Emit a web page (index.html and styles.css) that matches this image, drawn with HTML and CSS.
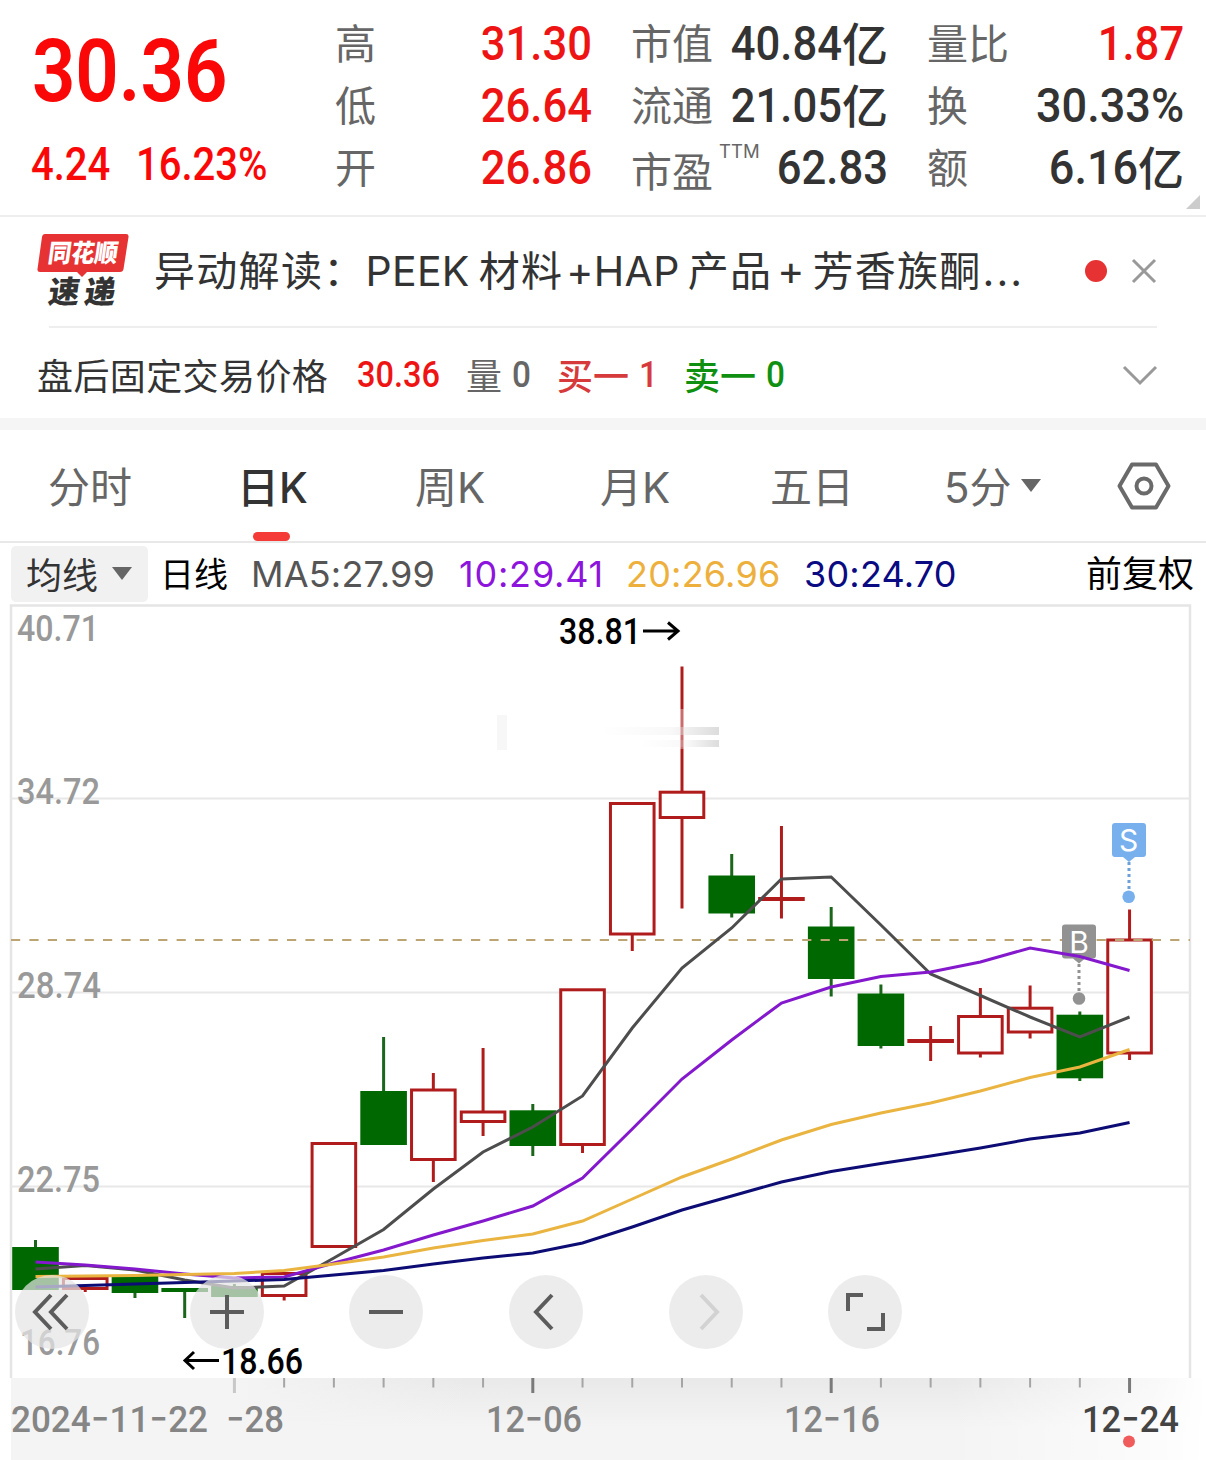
FILE: index.html
```html
<!DOCTYPE html>
<html lang="zh-CN">
<head>
  <meta charset="UTF-8" />
  <meta name="viewport" content="width=device-width, initial-scale=1.0" />
  <title>日K</title>
  <link rel="stylesheet" href="styles.css">
</head>
<body>

  <header class="quote">
    <div class="price">
      <div class="last num">30.36</div>
      <div class="change">
        <span class="num">4.24</span>
        <span class="num">16.23%</span>
      </div>
    </div>
    <dl class="stats">
      <div><dt>高</dt><dd class="up"><span class="num">31.30</span></dd></div>
      <div><dt>低</dt><dd class="up"><span class="num">26.64</span></dd></div>
      <div><dt>开</dt><dd class="up"><span class="num">26.86</span></dd></div>
    </dl>
    <dl class="stats">
      <div><dt>市值</dt><dd><span class="num">40.84</span>亿</dd></div>
      <div><dt>流通</dt><dd><span class="num">21.05</span>亿</dd></div>
      <div><dt class="low">市盈<sup>TTM</sup></dt><dd><span class="num">62.83</span></dd></div>
    </dl>
    <dl class="stats">
      <div><dt>量比</dt><dd class="up"><span class="num">1.87</span></dd></div>
      <div><dt>换</dt><dd><span class="num wide">30.33%</span></dd></div>
      <div><dt>额</dt><dd><span class="num wide">6.16</span>亿</dd></div>
    </dl>
    <i class="corner"></i>
  </header>

  <section class="notice">
    <svg class="brand" width="92" height="84" viewBox="0 -4 92 84">
      <path d="M8 1h81q3 0 2.500 3l-5 32q-.5 3-3.500 3H50l-5 5-5-5H3q-3 0-2.500-3l4.500-32q.5-3 3-3z" fill="#e63232"/>
      <g transform="skewX(-8)">
        <text x="14" y="29" textLength="70" lengthAdjust="spacingAndGlyphs" class="brand-top">同花顺</text>
        <text x="20" y="70" textLength="31" lengthAdjust="spacingAndGlyphs" class="brand-bottom">速</text>
        <text x="56" y="70" textLength="31" lengthAdjust="spacingAndGlyphs" class="brand-bottom">递</text>
      </g>
    </svg>
    <p><span>异动解读：</span><span class="latin peek">PEEK</span><span>材料</span><span class="latin hap">+HAP</span><span>产品</span><span class="latin plus">+</span><span>芳香族酮</span><span class="latin dots">...</span></p>
    <i class="dot"></i>
    <svg class="close" width="26" height="26" viewBox="0 0 26 26"><path d="M2 2l22 22M24 2L2 24"/></svg>
  </section>

  <section class="fixed-price">
    <span class="title">盘后固定交易价格</span>
    <span class="num now">30.36</span>
    <span class="vol">量</span><span class="num vol">0</span>
    <span class="buy">买一</span><span class="num buy">1</span>
    <span class="sell">卖一</span><span class="num sell">0</span>
    <svg class="chevron" width="36" height="22" viewBox="0 0 36 22"><path d="M2 2l16 16L34 2"/></svg>
  </section>

  <nav class="tabs">
    <a>分时</a>
    <a class="active">日K</a>
    <a>周K</a>
    <a>月K</a>
    <a>五日</a>
    <a>5分<i class="caret"></i></a>
    <svg width="54" height="48" viewBox="0 0 54 48"><path d="M15 2.500h24L51.500 24 39 45.500H15L2.500 24z"/><circle cx="27" cy="24" r="7.500"/></svg>
  </nav>

  <section class="legend">
    <button><span>均线</span><i class="caret"></i></button>
    <span class="day">日线</span>
    <span class="ma ma5">MA5:27.99</span>
    <span class="ma ma10">10:29.41</span>
    <span class="ma ma20">20:26.96</span>
    <span class="ma ma30">30:24.70</span>
    <span class="adjust">前复权</span>
  </section>

  <main class="chart">
    <svg id="chart" width="1206" height="856" viewBox="0 604 1206 856">
      <defs>
        <linearGradient id="fadeX">
          <stop offset="0" stop-color="#fff" stop-opacity="0"/>
          <stop offset="0.800" stop-color="#fff" stop-opacity="0.700"/>
          <stop offset="1" stop-color="#fff"/>
        </linearGradient>
        <linearGradient id="shadeY" x2="0" y2="1">
          <stop offset="0" stop-color="#e9e9e9"/>
          <stop offset="1" stop-color="#f4f4f4"/>
        </linearGradient>
        <linearGradient id="shadeLeft">
          <stop offset="0" stop-color="#f4f4f4"/>
          <stop offset="1" stop-color="#f4f4f4" stop-opacity="0"/>
        </linearGradient>
        <linearGradient id="smudge">
          <stop offset="0" stop-color="#ddd" stop-opacity="0"/>
          <stop offset="0.600" stop-color="#ddd" stop-opacity="0.200"/>
          <stop offset="1" stop-color="#dcdcdc"/>
        </linearGradient>
      </defs>

      <g class="axis-bg">
        <rect x="11" y="1378" width="1195" height="82" fill="#f4f4f4"/>
        <rect x="230" y="1378" width="976" height="50" fill="url(#shadeY)"/>
        <rect x="229" y="1378" width="240" height="50" fill="url(#shadeLeft)"/>
        <rect x="950" y="1378" width="256" height="82" fill="url(#fadeX)"/>
      </g>
      <path class="grid" d="M11 1378V605.500H1190V1378"/>
      <path class="grid thin" d="M11 798.500H1190M11 992.500H1190M11 1186.500H1190"/>

      <g class="scale">
        <text x="17" y="641" textLength="82">40.71</text>
        <text x="17" y="804" textLength="83">34.72</text>
        <text x="17" y="998" textLength="84">28.74</text>
        <text x="17" y="1192" textLength="83">22.75</text>
        <text x="20" y="1355" textLength="80">16.76</text>
      </g>

      <g id="candles"></g>
      <g class="smudges">
        <rect x="497" y="715" width="10" height="35" fill="#f7f7f7"/>
        <rect x="600" y="727" width="119" height="8" fill="url(#smudge)"/>
        <rect x="640" y="740" width="79" height="7" fill="url(#smudge)"/>
        <rect x="680" y="709" width="4" height="40" fill="#fff" opacity="0.350"/>
      </g>
      <path class="last-line" d="M11 940H1190"/>

      <g class="mark sell-mark">
        <path d="M1115 823h28q3 0 3 3v28q0 3-3 3h-8l-6 5-6-5h-8q-3 0-3-3v-28q0-3 3-3z"/>
        <path class="stem" d="M1129 862V890"/>
        <circle cx="1128.700" cy="896.700" r="6.300"/>
        <text x="1128.500" y="851">S</text>
      </g>
      <g class="mark buy-mark">
        <path d="M1065 924.500h28q3 0 3 3v28q0 3-3 3h-8l-6 5-6-5h-8q-3 0-3-3v-28q0-3 3-3z"/>
        <path class="stem" d="M1079 964V992"/>
        <circle cx="1079" cy="998.500" r="6.300"/>
        <text x="1079" y="952.500">B</text>
      </g>
      <g id="lines"></g>

      <g class="extreme">
        <text x="559" y="643.500" textLength="82">38.81</text>
        <path d="M643 631H677M668 622.500L678 631L668 639.500"/>
        <text x="221" y="1373.500" textLength="82">18.66</text>
        <path d="M219 1360.500H186M194 1352L185 1360.500L194 1369"/>
      </g>

      <g id="ticks"></g>
      <g id="dates"></g>
      <circle cx="1129" cy="1441.500" r="6" fill="#f05c5c"/>
    </svg>

    <div class="tools">
      <button><svg viewBox="0 0 74 74"><path d="M36 20L20 37L36 54M52 20L36 37L52 54"/></svg></button>
      <button><svg viewBox="0 0 74 74"><path d="M37 20V54M20 37H54"/></svg></button>
      <button><svg viewBox="0 0 74 74"><path d="M20 37H54"/></svg></button>
      <button><svg viewBox="0 0 74 74"><path d="M43 20L27 37L43 54"/></svg></button>
      <button class="disabled"><svg viewBox="0 0 74 74"><path d="M32 20L48 37L32 54"/></svg></button>
      <button><svg viewBox="0 0 74 74"><path d="M20 36V20H35M55 38V54H39"/></svg></button>
    </div>
  </main>

  <script src="chart.js"></script>
</body>
</html>
```

FILE: styles.css
```css
/* Reset */
* {
  margin: 0;
  padding: 0;
  box-sizing: border-box;
}

body {
  width: 1206px;
  height: 1460px;
  overflow: hidden;
  background: #fff;
  color: #333;
  font-family: Inter, "Noto Sans CJK SC", sans-serif;
}

button {
  border: none;
  font: inherit;
}

svg {
  display: block;
  flex: none;
}

/* Narrow digits */
.num {
  display: inline-block;
  font-family: Roboto, sans-serif;
  font-weight: 500;
  transform: scaleX(0.9);
  transform-origin: left;
}

/* Quote header */
.quote {
  position: relative;
  display: grid;
  grid-template-columns: 265px 256px 256px 256px;
  column-gap: 40px;
  height: 217px;
  padding: 13px 0 0 31px;
  border-bottom: 2px solid #eee;
}

.price {
  color: #fa0808;
  white-space: nowrap;
}

.last {
  height: 118px;
  padding-left: 1px;
  line-height: 116px;
  font-size: 87px;
  font-weight: 600;
  transform: scaleX(0.875);
}

.change {
  display: flex;
  gap: 14px;
  font-size: 46px;
  line-height: 66px;
}

.change .num {
  transform: scaleX(0.87);
}

.stats div {
  display: flex;
  justify-content: space-between;
  height: 62px;
  line-height: 62px;
}

.stats dt {
  margin-left: -1px;
  font-size: 41px;
  color: #666;
  white-space: nowrap;
}

.stats dt.low {
  padding-top: 4px;
}

.stats sup {
  display: inline-block;
  margin-left: 6px;
  font-size: 18.5px;
  line-height: 20px;
  vertical-align: 29px;
}

.stats dd {
  display: flex;
  font-size: 46px;
  font-weight: 500;
}

.stats .num {
  font-size: 49px;
  transform: scaleX(0.89);
  transform-origin: right;
}

.stats .num.wide {
  transform: scaleX(0.92);
}

.up {
  color: #ee1414;
}

.corner {
  position: absolute;
  right: 6px;
  bottom: 6px;
  border: 7.5px solid #ccc;
  border-top-color: transparent;
  border-left-color: transparent;
}

/* News notice */
.notice {
  display: flex;
  align-items: center;
  height: 111px;
  padding-bottom: 2px;
  margin: 0 49px;
  border-bottom: 2px solid #eee;
}

.brand {
  margin-left: -12px;
}

.brand-top {
  fill: #fff;
  font-size: 25px;
  font-weight: 900;
}

.brand-bottom {
  fill: #333;
  font-size: 31px;
  font-weight: 900;
}

.notice p {
  display: flex;
  align-items: center;
  width: 934px;
  margin-left: 25px;
  font-size: 41px;
  letter-spacing: 1.3px;
  line-height: 60px;
}

.latin {
  letter-spacing: 0;
}

.peek { margin-right: 9px; letter-spacing: 0.3px; }
.hap { margin: 0 8px 0 3px; letter-spacing: 0.3px; }
.plus { margin: -2px 8px 0 5px; }
.dots { margin-left: 1px; letter-spacing: 2px; }

.dot {
  width: 22px;
  height: 22px;
  border-radius: 50%;
  background: #e63232;
}

.close {
  margin-left: 24px;
}

.close path,
.chevron path {
  fill: none;
  stroke: #999;
  stroke-width: 3;
}

/* After-hours fixed price */
.fixed-price {
  display: flex;
  align-items: center;
  height: 102px;
  padding: 1px 48px 0 37px;
  border-bottom: 12px solid #f5f5f5;
  font-size: 36px;
}

.fixed-price .title {
  width: 320px;
  letter-spacing: 0.4px;
}

.fixed-price .num {
  margin-top: 2px;
  font-size: 37px;
}

.fixed-price .num.now {
  width: 109px;
  transform: scaleX(0.88);
}

.fixed-price .num.vol,
.fixed-price .num.buy,
.fixed-price .num.sell {
  margin-left: 10px;
  width: 45px;
}

.now {
  color: #ee1414;
}

.vol {
  color: #666;
}

.buy {
  color: #d63a3a;
  font-weight: 500;
}

.sell {
  color: #109010;
  font-weight: 500;
}

.chevron {
  margin: 4px 0 0 auto;
}

/* Period tabs */
.tabs {
  display: grid;
  grid-template-columns: 189px 178px 185px 170px 174px 173px 54px;
  align-items: center;
  height: 113px;
  padding-left: 48px;
  border-bottom: 2px solid #e8e8e8;
  font-size: 42px;
  color: #666;
}

.tabs a {
  position: relative;
  display: flex;
  align-items: center;
  height: 111px;
  padding-bottom: 2px;
}

.tabs .active {
  color: #333;
  font-weight: 500;
}

.tabs .active::after {
  content: '';
  position: absolute;
  left: 16px;
  bottom: 0;
  width: 37px;
  height: 9px;
  border-radius: 5px;
  background: #f43b38;
}

.tabs path,
.tabs circle {
  fill: none;
  stroke: #6a6a6a;
  stroke-width: 4;
  stroke-linejoin: round;
}

.caret {
  margin: 2px 0 0 9px;
  border: 10px solid transparent;
  border-top: 13px solid #666;
  border-bottom: none;
}

/* Moving average legend */
.legend {
  display: flex;
  align-items: center;
  height: 61px;
  padding: 0 12px 0 11px;
  font-size: 36px;
}

.legend button {
  display: flex;
  align-items: center;
  width: 137px;
  height: 56px;
  padding: 0 0 2px 15px;
  border-radius: 5px;
  background: #f1f1f1;
  color: #333;
}

.legend .caret {
  margin-left: 14px;
}

.day {
  width: 103px;
  padding: 0 0 3px 12px;
  font-size: 34px;
  color: #000;
}

.ma {
  letter-spacing: 0.2px;
}

.ma5 { width: 208px; color: #555; }
.ma10 { width: 167px; color: #8c14dc; letter-spacing: 0.8px; }
.ma20 { width: 178px; color: #eeb03c; }
.ma30 { color: #0a0a82; }

.adjust {
  margin-left: auto;
  padding-bottom: 5px;
  color: #000;
}

/* Chart */
.chart {
  position: relative;
  height: 856px;
}

#chart text {
  font-family: Roboto, sans-serif;
  font-size: 36px;
  font-weight: 500;
}

#chart .scale {
  fill: #999;
}

.grid {
  fill: none;
  stroke: #e5e5e5;
  stroke-width: 2.5;
}

.grid.thin {
  stroke: #e8e8e8;
  stroke-width: 1.8;
}

.last-line {
  stroke: #bda573;
  stroke-width: 1.8;
  stroke-dasharray: 9.2 9.2;
}

.candle-up {
  fill: #fff;
  stroke: #b01c1c;
  stroke-width: 3;
}

.candle-down {
  fill: #006800;
  stroke: #1a661a;
  stroke-width: 3;
}

.candle-down rect {
  stroke: none;
}

#lines polyline {
  fill: none;
  stroke-width: 3;
}

#chart .mark text {
  fill: #fff;
  font-family: Inter, sans-serif;
  font-size: 30px;
  font-weight: 400;
  text-anchor: middle;
}

.sell-mark { fill: #78b0ee; stroke: #6d9fd8; }
.buy-mark { fill: #929292; stroke: #929292; }

.mark path,
.mark circle,
.mark text {
  stroke: none;
}

.mark .stem {
  stroke: inherit;
  stroke-width: 3;
  stroke-dasharray: 3;
}

.extreme path {
  fill: none;
  stroke: #000;
  stroke-width: 3;
}

#dates {
  fill: #858585;
}

#chart #dates .dash {
  font-family: Inter, sans-serif;
  font-size: 42px;
  font-weight: 400;
}

#chart #dates .today {
  fill: #444;
}

/* Floating chart tools */
.tools {
  position: absolute;
  left: 15px;
  top: 671px;
  display: flex;
  gap: 85.7px;
}

.tools button {
  width: 74px;
  height: 74px;
  border-radius: 50%;
  background: rgba(229, 229, 229, 0.72);
}

.tools button:first-child {
  margin-right: 15px;
}

.tools path {
  fill: none;
  stroke: #5c5c5c;
  stroke-width: 4;
}

.tools .disabled path {
  stroke: #d2d2d2;
}
```

FILE: chart.js
```js
const NS = "http://www.w3.org/2000/svg";
const step = 49.73;
const xAt = i => 35.5 + i * step;

function add(parent, tag, attrs, text) {
  const el = document.createElementNS(NS, tag);
  for (const key in attrs) el.setAttribute(key, attrs[key]);
  if (text) el.textContent = text;
  parent.appendChild(el);
  return el;
}

// [up, high, body top, body bottom, low]
const candles = [
  [0, 1240, 1247, 1290, 1290],
  [1, 1277, 1277, 1290, 1292],
  [0, 1276, 1276, 1293, 1298],
  [0, 1288, 1288, 1292, 1318],
  [0, 1284, 1286, 1297, 1297],
  [1, 1272, 1272, 1297, 1300.5],
  [1, 1142, 1142, 1248, 1248],
  [0, 1037, 1091, 1145, 1145],
  [1, 1073, 1088.5, 1161, 1182],
  [1, 1048, 1110.5, 1123, 1136],
  [0, 1104, 1110.3, 1146, 1156],
  [1, 989, 988.3, 1146, 1153],
  [1, 803, 802, 935.5, 951],
  [1, 666.5, 790.7, 819, 908.5],
  [0, 854, 875.5, 913.5, 917.5],
  [1, 826, 897, 901, 918.5],
  [0, 907, 926.5, 979, 996.5],
  [0, 984.5, 993.5, 1046, 1048.5],
  [1, 1026, 1039, 1043, 1061],
  [1, 988, 1015, 1054.5, 1057.5],
  [1, 985.5, 1006.7, 1033.5, 1038.5],
  [0, 1011.5, 1014.7, 1078.3, 1081],
  [1, 909.5, 938.5, 1054.5, 1060]
];

const candleLayer = document.getElementById("candles");
candles.forEach(([up, high, top, bottom, low], i) => {
  const x = xAt(i);
  const g = add(candleLayer, "g", { class: up ? "candle-up" : "candle-down" });
  add(g, "path", { d: `M${x} ${high}V${low}` });
  // hollow bodies keep their stroke inside the body box
  const inset = up ? 1.5 : 0;
  add(g, "rect", {
    x: x - 23.3 + inset,
    y: top + inset,
    width: 46.6 - inset * 2,
    height: bottom - top - inset * 2
  });
});

const averages = [
  ["#4d4d4d", [1269, 1265.5, 1270, 1280, 1288, 1286, 1258, 1229.5, 1189, 1152, 1127, 1096, 1028, 968, 928, 879, 877, 925, 974, 995.5, 1017, 1037, 1017]],
  ["#8418cc", [1262, 1265, 1269, 1274, 1278, 1277, 1263, 1250, 1235, 1221, 1206, 1178, 1129, 1079, 1040, 1003, 987, 976.5, 972, 962, 948, 956.5, 970.5]],
  ["#eab440", [1276.5, 1276, 1275.5, 1274.5, 1273.5, 1270.5, 1264, 1257, 1248, 1240.5, 1234, 1221, 1199, 1177, 1159, 1140, 1124.5, 1113, 1103, 1091, 1077.5, 1067, 1049.5]],
  ["#0c0c74", [1287, 1285.5, 1284, 1282.5, 1281, 1279.5, 1275, 1270.5, 1264, 1258, 1253, 1243, 1227, 1210, 1196, 1182, 1171.5, 1163.5, 1156, 1148, 1139, 1133, 1122.5]]
];

const lineLayer = document.getElementById("lines");
averages.forEach(([color, ys]) => {
  add(lineLayer, "polyline", {
    stroke: color,
    points: ys.map((y, i) => `${xAt(i)},${y}`).join(" ")
  });
});

// Time axis
const ticks = document.getElementById("ticks");
for (let i = 4; i < candles.length; i++) {
  const major = (i - 4) % 6 === 0;
  add(ticks, "path", {
    d: `M${xAt(i)} 1378V${major ? 1393 : 1387.5}`,
    stroke: i === 4 ? "#c8c8c8" : major ? "#7a7a7a" : "#a5a5a5",
    "stroke-width": major ? 3 : 2
  });
}

const dates = [
  ["2024-11-22", 11, 197],
  ["-28", 226, 58],
  ["12-06", 486, 96],
  ["12-16", 784, 96],
  ["12-24", 1082, 97, "today"]
];

const dateLayer = document.getElementById("dates");
dates.forEach(([label, x, width, cls]) => {
  const t = add(dateLayer, "text", {
    x, y: 1432, textLength: width, lengthAdjust: "spacingAndGlyphs", class: cls || ""
  });
  label.split(/(-)/).forEach(part => {
    if (part) add(t, "tspan", part === "-" ? { class: "dash" } : {}, part);
  });
});

document.querySelectorAll("#chart .scale text, #chart .extreme text").forEach(t => {
  t.setAttribute("lengthAdjust", "spacingAndGlyphs");
});
```
